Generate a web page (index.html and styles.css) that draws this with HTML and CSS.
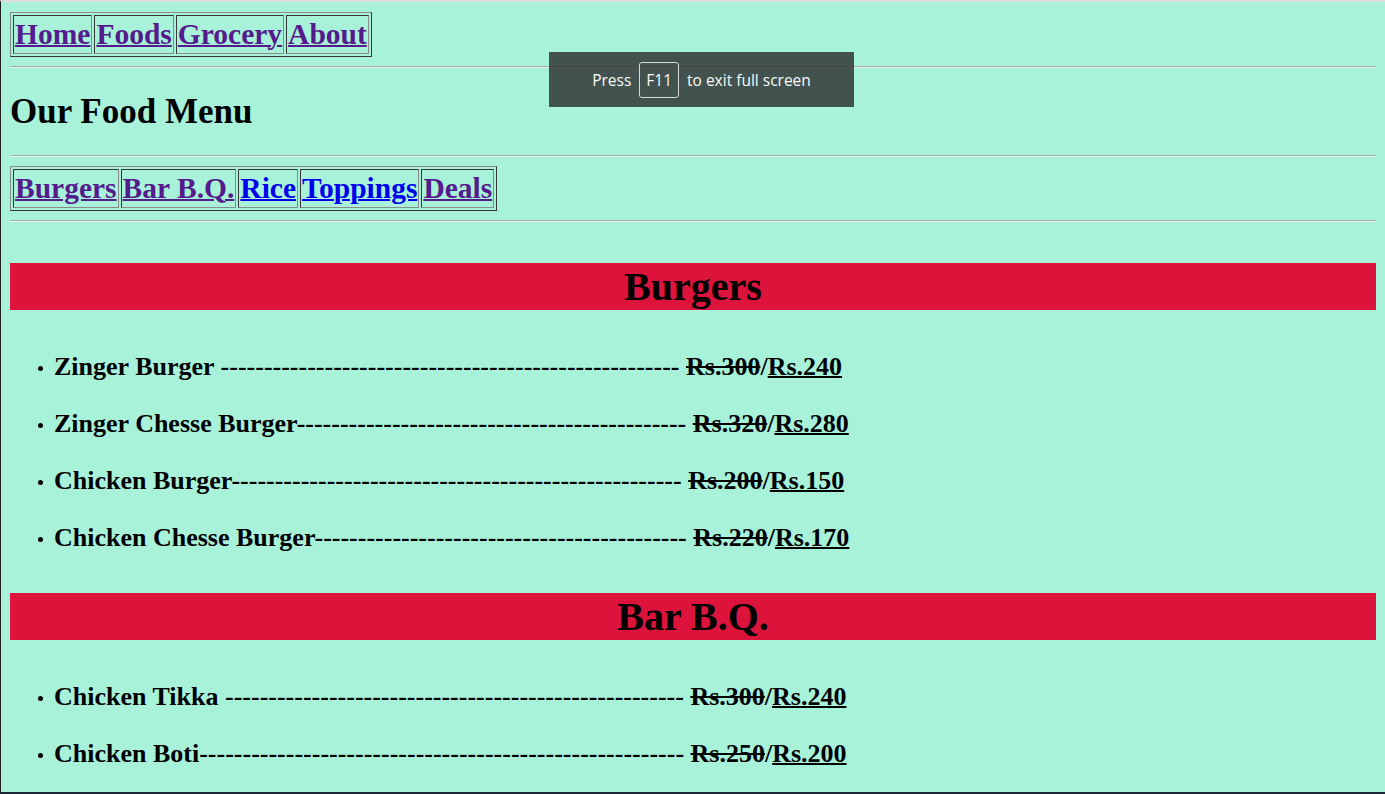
FILE: index.html
```html
<!DOCTYPE html>
<html lang="en">
<head>
<meta charset="utf-8">
<title>Our Food Menu</title>
<link rel="stylesheet" href="styles.css">
</head>
<body>
<table class="nav">
  <tr>
    <td><a class="visited" href="#">Home</a></td>
    <td><a class="visited" href="#">Foods</a></td>
    <td><a class="visited" href="#">Grocery</a></td>
    <td><a class="visited" href="#">About</a></td>
  </tr>
</table>
<hr>
<h2 class="title">Our Food Menu</h2>
<hr>
<table class="nav">
  <tr>
    <td><a class="visited" href="#">Burgers</a></td>
    <td><a class="visited" href="#">Bar B.Q.</a></td>
    <td><a href="#">Rice</a></td>
    <td><a href="#">Toppings</a></td>
    <td><a class="visited" href="#">Deals</a></td>
  </tr>
</table>
<hr>

<h1 class="band first">Burgers</h1>
<ul class="menu">
  <li>Zinger Burger ----------------------------------------------------- <s>Rs.300</s>/<u>Rs.240</u></li>
  <li>Zinger Chesse Burger--------------------------------------------- <s>Rs.320</s>/<u>Rs.280</u></li>
  <li>Chicken Burger---------------------------------------------------- <s>Rs.200</s>/<u>Rs.150</u></li>
  <li>Chicken Chesse Burger------------------------------------------- <s>Rs.220</s>/<u>Rs.170</u></li>
</ul>

<h1 class="band">Bar B.Q.</h1>
<ul class="menu">
  <li>Chicken Tikka ----------------------------------------------------- <s>Rs.300</s>/<u>Rs.240</u></li>
  <li>Chicken Boti-------------------------------------------------------- <s>Rs.250</s>/<u>Rs.200</u></li>
</ul>

<div class="toast">Press <span class="key">F11</span> to exit full screen</div>
</body>
</html>
```

FILE: styles.css
```css
html {
  box-sizing: border-box;
  height: 794px;
  overflow: hidden;
  background: #a8f2da;
  border-top: 2px solid #dcdcdc;
  border-left: 1px solid #1e1e1e;
  border-bottom: 2px solid #1b2636;
}

body {
  margin: 10px 9px 0 9px;
  font-family: "Liberation Serif", "Times New Roman", serif;
  color: #000;
}

.nav {
  border: 1px outset #8a8a8a;
  border-spacing: 2px;
  border-collapse: separate;
}

.nav td {
  border: 1px inset #8a8a8a;
  padding: 1px;
  font-size: 29.5px;
  font-weight: bold;
  line-height: 35px;
}

.nav a {
  color: #0000ee;
  text-decoration-thickness: 2px;
}

.nav a.visited {
  color: #551a8b;
}

hr {
  margin: 9px 0;
  border: 0;
  border-top: 1px solid #9fb0a9;
  border-bottom: 1px solid #e6f5ee;
  height: 0;
}

.title {
  font-size: 35px;
  font-weight: bold;
  line-height: 40px;
  margin: 24px 0 23px;
}

.band {
  background: #dc143c;
  text-align: center;
  font-size: 40px;
  line-height: 47px;
  margin: 0;
}

.band.first {
  margin-top: 41px;
}

.menu {
  margin: 0;
  padding: 28px 0 27px 44px;
}

.menu li {
  list-style: none;
  font-size: 26px;
  font-weight: bold;
  line-height: 30px;
  padding: 13.5px 0;
}

.menu li::before {
  content: "";
  display: inline-block;
  width: 5px;
  height: 5px;
  border-radius: 50%;
  background: #000;
  margin-left: -16px;
  margin-right: 11px;
  vertical-align: middle;
}

.menu s,
.menu u {
  text-decoration-thickness: 2px;
}

.toast {
  position: absolute;
  left: 549px;
  top: 52px;
  width: 305px;
  height: 55px;
  background: rgba(44, 46, 46, 0.82);
  color: #fafafa;
  font-family: "Open Sans", "Noto Sans", sans-serif;
  font-size: 15.5px;
  display: flex;
  align-items: center;
  justify-content: center;
  gap: 8px;
}

.key {
  border: 1px solid #d8d8d8;
  border-radius: 3px;
  padding: 0 6px;
  line-height: 34px;
  height: 34px;
}
```
